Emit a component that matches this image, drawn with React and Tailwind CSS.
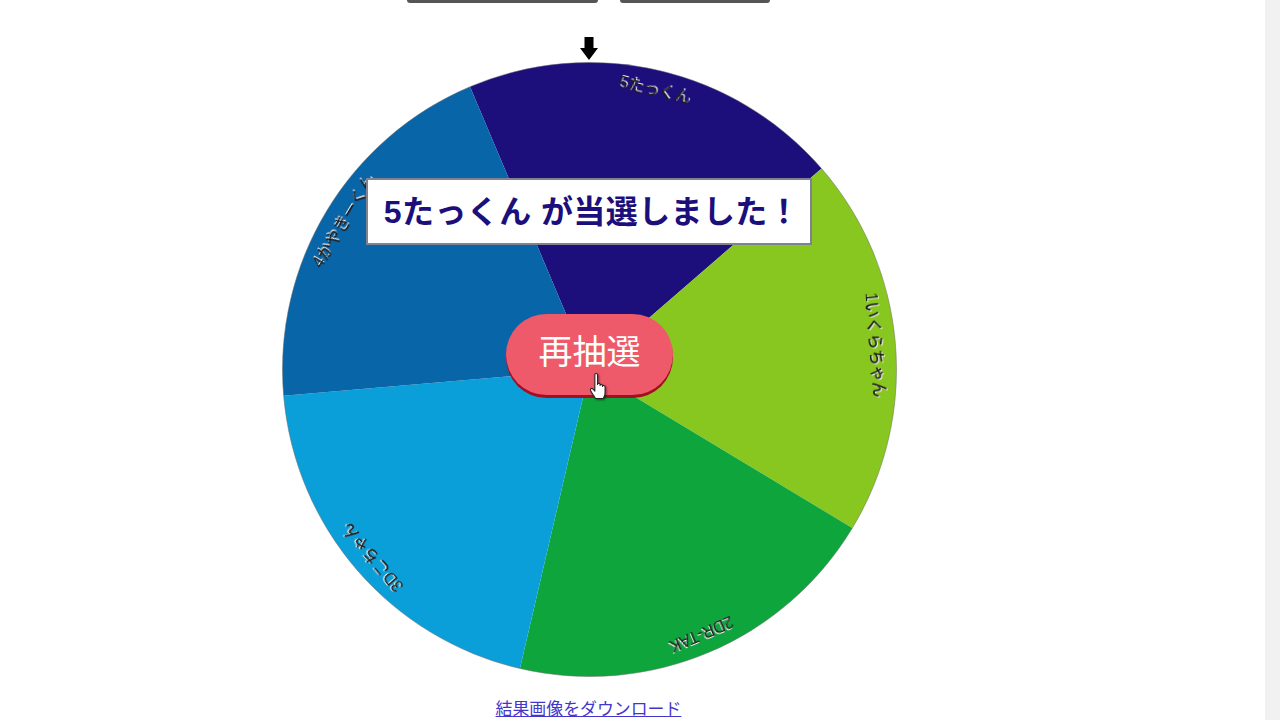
import React from 'react';

const cx = 307.5;
const r = 307;

const slices = [
  { name: '5たっくん', color: '#1c0f7c', start: -22.9 },
  { name: '1いくらちゃん', color: '#88c71f', start: 49.1 },
  { name: '2DR-TAK', color: '#0ea53d', start: 121.1 },
  { name: '3Dこちゃん', color: '#0a9fd8', start: 193.1 },
  { name: '4かやきーくん', color: '#0765a8', start: 265.1 },
];

function slicePath(start) {
  const a = (start * Math.PI) / 180;
  const b = ((start + 72) * Math.PI) / 180;
  const x1 = cx + r * Math.sin(a);
  const y1 = cx - r * Math.cos(a);
  const x2 = cx + r * Math.sin(b);
  const y2 = cx - r * Math.cos(b);
  return `M${cx} ${cx} L${x1} ${y1} A${r} ${r} 0 0 1 ${x2} ${y2} Z`;
}

function Wheel() {
  return (
    <svg viewBox="0 0 615 615" className="w-[615px] h-[615px] block">
      {slices.map((s) => (
        <path key={s.name} d={slicePath(s.start)} fill={s.color} />
      ))}
      <circle cx={cx} cy={cx} r={r} fill="none" stroke="#6b6b6b" strokeWidth="0.5" />
      {slices.map((s) => (
        <g key={s.name} transform={`rotate(${s.start + 36} ${cx} ${cx})`}>
          <text
            x={cx}
            y="26"
            textAnchor="middle"
            fontSize="16"
            fontWeight="500"
            fill="#1a1a1a"
            className="[filter:drop-shadow(1px_-1px_0_#f4f4f4)]"
          >
            {s.name}
          </text>
        </g>
      ))}
    </svg>
  );
}

function HandCursor() {
  return (
    <svg viewBox="0 0 20 28" className="w-[22px] h-[29px] drop-shadow-[1px_1px_1px_rgba(0,0,0,0.5)]">
      <path
        d="M6 2.500c0-1.500 2.600-1.500 2.600 0V12c0-1.400 2.400-1.400 2.400 0v1c0-1.300 2.400-1.300 2.400 0v1c0-1.200 2.400-1.200 2.400.2v6c0 2.600-1 3.600-1.600 5.300H6.600C5.600 23.500 3.800 21.500 2 18c-.9-1.800 1-2.900 2.200-1.500L6 18.500Z"
        fill="#fff"
        stroke="#222"
        strokeWidth="1"
        strokeLinejoin="round"
      />
    </svg>
  );
}

export default function App() {
  return (
    <div className="flex h-screen overflow-hidden bg-white font-['Liberation_Sans','Noto_Sans_CJK_JP',sans-serif]">
      <div className="w-[1179px] flex flex-col items-center">
        <div className="flex gap-[22px] h-[3px] -translate-x-px">
          <div className="w-[191px] h-[3px] bg-[#555] rounded-b-[3px]" />
          <div className="w-[150px] h-[3px] bg-[#555] rounded-b-[3px]" />
        </div>
        <svg viewBox="0 0 18 23" className="w-[18px] h-[23px] mt-[34px] shrink-0 -translate-x-px">
          <path d="M4.500 0h9v11H18L9 23 0 11h4.500Z" fill="#000" />
        </svg>
        <div className="relative w-[615px] h-[615px] mt-[2px] shrink-0">
          <Wheel />
          <div className="absolute left-[84px] top-[116px] w-[446px] h-[67px] bg-white border-2 border-[#80828f] flex items-center justify-center pl-[6px] text-[32px] font-bold tracking-[0.4px] text-[#1c0f7c] whitespace-pre">
            5たっくん が当選しました！
          </div>
          <div className="absolute left-[224px] top-[252px] w-[167px] h-[81px] rounded-full bg-[#ef5a6a] shadow-[0_3px_0_#a30f20] flex items-center justify-center text-[34px] text-white pb-[4px]">
            再抽選
          </div>
          <div className="absolute left-[306px] top-[310px]">
            <HandCursor />
          </div>
        </div>
        <a href="#" className="mt-[22px] -translate-x-px text-[16.9px] leading-[22px] text-[#4336cc] underline">
          結果画像をダウンロード
        </a>
      </div>
      <div className="flex-1" />
      <div className="w-[15px] bg-[#f1f1f1]" />
    </div>
  );
}
